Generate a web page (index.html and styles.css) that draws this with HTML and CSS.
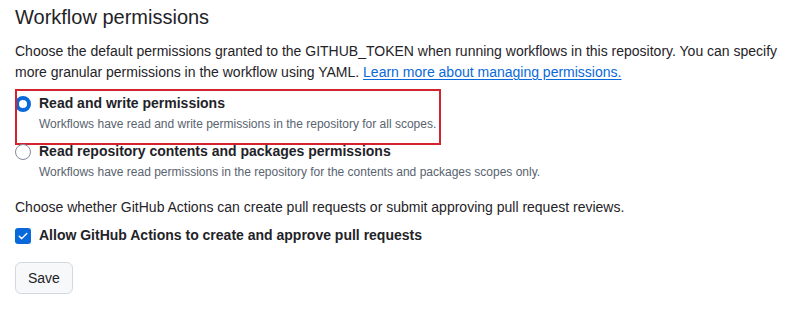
FILE: index.html
```html
<!DOCTYPE html>
<html lang="en">
<head>
<meta charset="utf-8">
<title>Workflow permissions</title>
<link rel="stylesheet" href="styles.css">
</head>
<body>
<main class="page">
  <h2 class="subhead">Workflow permissions</h2>
  <p class="intro">Choose the default permissions granted to the GITHUB_TOKEN when running workflows in this repository. You can specify more granular permissions in the workflow using YAML. <a class="link" href="#">Learn more about managing permissions.</a></p>

  <div class="options">
    <div class="option option--marked">
      <span class="radio radio--checked"></span>
      <div class="option-body">
        <div class="option-label">Read and write permissions</div>
        <div class="option-note">Workflows have read and write permissions in the repository for all scopes.</div>
      </div>
    </div>
    <div class="option">
      <span class="radio"></span>
      <div class="option-body">
        <div class="option-label">Read repository contents and packages permissions</div>
        <div class="option-note">Workflows have read permissions in the repository for the contents and packages scopes only.</div>
      </div>
    </div>
  </div>

  <p class="intro intro--second">Choose whether GitHub Actions can create pull requests or submit approving pull request reviews.</p>

  <div class="check">
    <span class="checkbox">
      <svg viewBox="0 0 16 16" width="12" height="12" aria-hidden="true"><polyline points="3,8.3 6.3,11.5 13,4.6" fill="none" stroke="#ffffff" stroke-width="1.9" stroke-linecap="round" stroke-linejoin="round"/></svg>
    </span>
    <span class="option-label">Allow GitHub Actions to create and approve pull requests</span>
  </div>

  <button class="btn" type="button">Save</button>
</main>
</body>
</html>
```

FILE: styles.css
```css
* { box-sizing: border-box; }

html, body {
  margin: 0;
  padding: 0;
  background: #ffffff;
}

body {
  font-family: "Liberation Sans", Arial, Helvetica, sans-serif;
  color: #1f2328;
  font-size: 14px;
  line-height: 21px;
}

.page {
  padding: 2px 15px 0 15px;
  width: 805px;
}

.subhead {
  margin: 0;
  font-size: 20px;
  line-height: 30px;
  font-weight: 400;
  color: #1f2328;
}

.intro {
  margin: 9px 0 0 0;
  font-size: 14px;
  line-height: 21px;
}

.intro--second {
  margin-top: 16px;
}

.link {
  color: #0969da;
  text-decoration: underline;
  text-underline-offset: 2px;
}

.options {
  margin-top: 10px;
  display: flex;
  flex-direction: column;
  gap: 8px;
}

.option {
  position: relative;
  display: flex;
  align-items: flex-start;
  gap: 8px;
}

.option--marked::after {
  content: "";
  position: absolute;
  top: -4px;
  left: 0;
  width: 422px;
  height: 52px;
  border: 2px solid #d3232e;
  pointer-events: none;
}

.radio {
  flex: 0 0 auto;
  width: 16px;
  height: 16px;
  margin-top: 3px;
  border-radius: 50%;
  border: 1px solid #818b98;
  background: #ffffff;
}

.radio--checked {
  border: 4px solid #0969da;
}

.option-label {
  font-weight: 700;
  font-size: 14px;
  line-height: 21px;
  color: #1f2328;
}

.option-note {
  margin-top: 1px;
  font-size: 12px;
  line-height: 18px;
  color: #59636e;
}

.check {
  margin-top: 7px;
  display: flex;
  align-items: flex-start;
  gap: 8px;
}

.checkbox {
  flex: 0 0 auto;
  width: 16px;
  height: 16px;
  margin-top: 3px;
  border-radius: 3px;
  background: #0969da;
  display: flex;
  align-items: center;
  justify-content: center;
}

.btn {
  display: block;
  margin-top: 16px;
  height: 32px;
  padding: 0 12px;
  font-family: "Liberation Sans", Arial, Helvetica, sans-serif;
  font-size: 14px;
  line-height: 20px;
  font-weight: 400;
  color: #1f2328;
  background: #f6f8fa;
  border: 1px solid #d1d9e0;
  border-radius: 6px;
}
```
